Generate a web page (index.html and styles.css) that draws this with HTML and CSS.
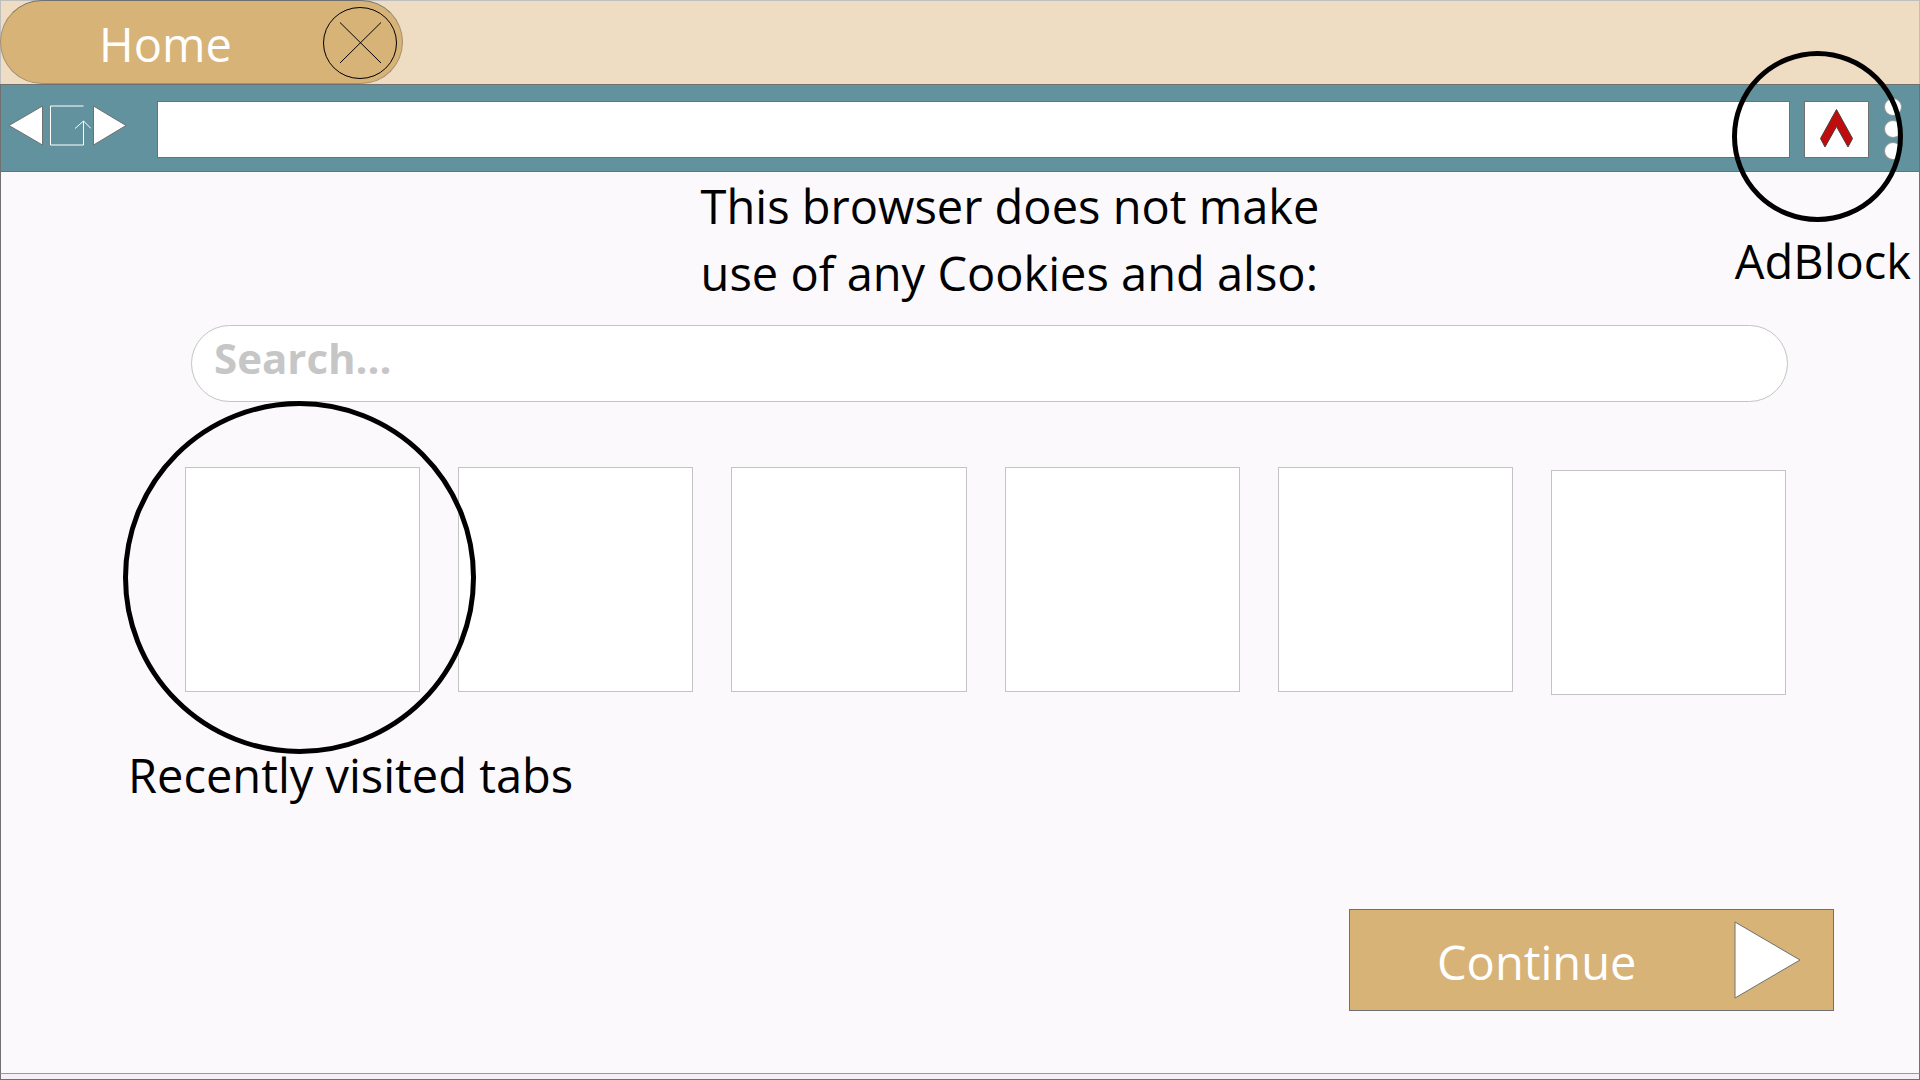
FILE: index.html
```html
<!DOCTYPE html>
<html lang="en">
<head>
<meta charset="utf-8">
<meta name="viewport" content="width=device-width, initial-scale=1">
<title>Home</title>
<link rel="stylesheet" href="styles.css">
</head>
<body>
<header>
  <div class="tab-strip">
    <div class="tab">
      <span class="label">Home</span>
      <button class="plain" type="button" aria-label="Close tab">
        <svg class="icon" width="74" height="72" viewBox="0 0 74 72">
          <ellipse cx="37" cy="36" rx="36.5" ry="35.5"/>
          <path d="M17 15.500L58 56M58 15.500L17 56"/>
        </svg>
      </button>
    </div>
  </div>
  <div class="toolbar">
    <nav class="nav-buttons" aria-label="History">
      <button class="plain" type="button" aria-label="Back">
        <svg class="icon arrow" width="35" height="41" viewBox="0 0 35 41"><path d="M34.500 1V40L1 20.500Z"/></svg>
      </button>
      <button class="plain" type="button" aria-label="Reload">
        <svg class="icon reload" width="42" height="41" viewBox="0 0 42 41">
          <path d="M34.500 1H1.500V40H34.500V16M26 23.500L34.500 16L42 23.500"/>
        </svg>
      </button>
      <button class="plain" type="button" aria-label="Forward">
        <svg class="icon arrow" width="35" height="41" viewBox="0 0 35 41"><path d="M1.500 1V40L34 20.500Z"/></svg>
      </button>
    </nav>
    <input class="address" type="text" aria-label="Address">
    <div class="extension">
      <button class="adblock" type="button" aria-label="AdBlock">
        <svg class="icon" width="34" height="40" viewBox="0 0 34 40">
          <path class="adblock-mark" d="M16.500 1.500L32.500 30.500L28 39L16.500 18.500L5 39L0.500 30.500Z"/>
        </svg>
      </button>
      <span class="ring ring-small"></span>
      <span class="note adblock-note">AdBlock</span>
    </div>
    <button class="plain" type="button" aria-label="Menu">
      <svg class="icon dots" width="18" height="62" viewBox="0 0 18 62">
        <circle cx="9" cy="9" r="8.500"/><circle cx="9" cy="31" r="8.500"/><circle cx="9" cy="53" r="8.500"/>
      </svg>
    </button>
  </div>
</header>
<main>
  <h1>This browser does not make<br>use of any Cookies and also:</h1>
  <input class="search" type="search" placeholder="Search..." aria-label="Search">
  <section class="recent">
    <div class="tiles">
      <a class="tile" href="#" aria-label="Recent tab 1"><span class="ring ring-large"></span></a>
      <a class="tile" href="#" aria-label="Recent tab 2"></a>
      <a class="tile" href="#" aria-label="Recent tab 3"></a>
      <a class="tile" href="#" aria-label="Recent tab 4"></a>
      <a class="tile" href="#" aria-label="Recent tab 5"></a>
      <a class="tile" href="#" aria-label="Recent tab 6"></a>
    </div>
    <p class="note recent-note">Recently visited tabs</p>
  </section>
  <button class="continue" type="button">
    <span class="label">Continue</span>
    <svg class="icon arrow" width="67" height="78" viewBox="0 0 67 78"><path d="M1 1V77L66 39Z"/></svg>
  </button>
</main>
<footer></footer>
</body>
</html>
```
FILE: styles.css
```css
* {
  box-sizing: border-box;
}

body {
  margin: 0;
  min-height: 100vh;
  display: flex;
  flex-direction: column;
  background: #fbf9fc;
  color: #000;
  font: 47px/67px "Open Sans", "Noto Sans", sans-serif;
}

button,
input {
  margin: 0;
  font: inherit;
}

.plain {
  display: block;
  padding: 0;
  border: 0;
  background: none;
}

.label {
  padding-top: 4px;
}

.icon {
  display: block;
  fill: none;
  stroke: #000;
}

.arrow,
.dots {
  fill: #fff;
  stroke: #707070;
}

.dots {
  stroke: #959595;
}

.reload {
  stroke: #fff;
}

.adblock-mark {
  fill: #c00c0c;
  stroke: #404040;
}

.tab-strip {
  height: 84px;
  border: 1px solid #bfbfbf;
  border-bottom: 0;
  background: #eeddc2;
}

.tab {
  display: flex;
  align-items: center;
  justify-content: space-between;
  width: 403px;
  height: 84px;
  margin: -1px;
  padding: 2px 5px 0 98px;
  border: 1px solid #a58f6c;
  border-top-color: #707070;
  border-radius: 42px;
  background: #d7b377;
  color: #fff;
}

.tab .label {
  padding-top: 2px;
}

.toolbar {
  display: flex;
  align-items: center;
  height: 88px;
  padding: 2px 17px 0 7px;
  border: 1px solid #707070;
  background: #62929e;
}

.nav-buttons {
  display: flex;
  gap: 6px;
  margin-right: 30px;
  padding-bottom: 8px;
}

.nav-buttons .plain:last-child {
  margin-left: -5px;
}

.address {
  flex: 1;
  min-width: 0;
  height: 57px;
  padding: 0 12px;
  border: 1px solid #707070;
  background: #fff;
  font-size: 32px;
}

.extension {
  position: relative;
  margin: 0 15px 0 14px;
}

.adblock {
  display: grid;
  place-items: center;
  width: 65px;
  height: 57px;
  padding: 0 0 2px;
  border: 1px solid #707070;
  background: #fff;
}

.ring {
  position: absolute;
  border: 5px solid #000;
  border-radius: 50%;
  pointer-events: none;
}

.ring-small {
  top: -50px;
  left: -72px;
  width: 171px;
  height: 171px;
}

.ring-large {
  top: -67px;
  left: -63px;
  width: 353px;
  height: 353px;
}

.adblock-note {
  position: absolute;
  top: 127px;
  right: -42px;
}

main {
  flex: 1;
  display: flex;
  flex-direction: column;
  padding: 1px 132px 62px 184px;
  border: solid #707070;
  border-width: 0 1px;
}

h1 {
  align-self: center;
  margin: 0;
  padding-left: 48px;
  font-size: 47px;
  font-weight: 400;
}

.search {
  width: calc(100% - 5px);
  height: 77px;
  margin: 18px 0 0 6px;
  padding: 0 22px 12px;
  border: 1px solid #c4c4c4;
  border-radius: 39px;
  background: #fff;
  font-size: 42px;
  font-weight: 700;
}

.search::placeholder {
  color: #c6c6c6;
  opacity: 1;
}

.tiles {
  display: grid;
  grid-template-columns: repeat(6, 1fr);
  gap: 38px;
  height: 228px;
  margin: 65px 1px 0 0;
}

.tile {
  position: relative;
  height: 225px;
  border: 1px solid #c4c4c4;
  background: #fff;
}

.tile:first-child {
  z-index: 1;
}

.tile:last-child {
  align-self: end;
}

.recent-note {
  margin: 47px 0 0 -57px;
}

.continue {
  display: flex;
  align-items: center;
  justify-content: space-between;
  align-self: flex-end;
  width: 485px;
  height: 102px;
  margin: auto -47px 0 0;
  padding: 0 32px 0 87px;
  border: 1px solid #707070;
  background: #d7b377;
  color: #fff;
}

footer {
  height: 7px;
  border: 1px solid #707070;
  border-top-color: #9c989d;
  background: #f4f0f6;
}
```
